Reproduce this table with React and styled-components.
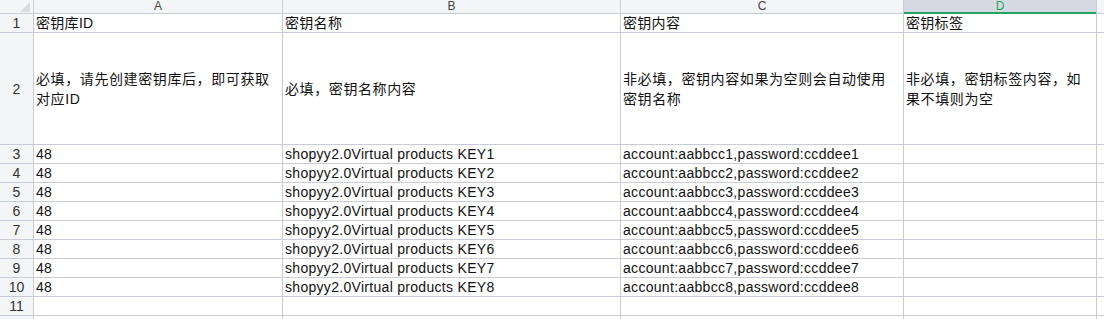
import React from 'react';
import styled, { createGlobalStyle } from 'styled-components';

const Global = createGlobalStyle`
  html, body {
    margin: 0;
    padding: 0;
    background: #ffffff;
    overflow: hidden;
  }
  body {
    font-family: "Liberation Sans", "Noto Sans CJK SC", Arial, sans-serif;
    font-size: 14px;
    color: #111;
  }
`;

const Sheet = styled.div`
  display: grid;
  grid-template-columns: 33px 248px 337px 282px 192px 1fr;
  grid-template-rows: 13px 18px 111px repeat(9, 18px) 10px;
  gap: 1px;
  background: #c9ccd8;
  width: 1104px;
  height: 319px;
  overflow: hidden;
`;

const Corner = styled.div`
  background: #f4f5f7;
  position: relative;
  &::after {
    content: '';
    position: absolute;
    right: 3px;
    bottom: 1px;
    width: 10px;
    height: 10px;
    background: #d8dbe1;
    clip-path: polygon(100% 0, 100% 100%, 0 100%);
  }
`;

const ColHead = styled.div`
  background: ${p => (p.$active ? '#d6d9e0' : '#f4f5f7')};
  color: ${p => (p.$active ? '#21a366' : '#444')};
  font-size: 12px;
  line-height: 13px;
  text-align: center;
  box-shadow: ${p => (p.$active ? 'inset 0 -2px 0 #21a366' : 'none')};
  margin-bottom: ${p => (p.$active ? '-1px' : '0')};
`;

const RowHead = styled.div`
  background: #f4f5f7;
  color: #333;
  font-size: 14px;
  display: flex;
  align-items: ${p => (p.$tall ? 'center' : 'flex-end')};
  justify-content: center;
  line-height: 18px;
  overflow: hidden;
`;

const Cell = styled.div`
  background: #ffffff;
  padding: 0 2px;
  display: flex;
  flex-direction: column;
  justify-content: ${p => (p.$tall ? 'center' : 'flex-end')};
  line-height: ${p => (p.$tall ? '20px' : '18px')};
  letter-spacing: ${p => (p.$tall ? '0.6px' : '0.3px')};
  overflow: hidden;
  white-space: nowrap;
`;

const columns = ['A', 'B', 'C', 'D', ''];

const header = ['密钥库ID', '密钥名称', '密钥内容', '密钥标签', ''];
const notes = [
  ['必填，请先创建密钥库后，即可获取', '对应ID'],
  ['必填，密钥名称内容'],
  ['非必填，密钥内容如果为空则会自动使用', '密钥名称'],
  ['非必填，密钥标签内容，如', '果不填则为空'],
  [],
];

const data = Array.from({ length: 8 }, (_, i) => [
  '48',
  `shopyy2.0Virtual products KEY${i + 1}`,
  `account:aabbcc${i + 1},password:ccddee${i + 1}`,
  '',
  '',
]);

const blank = ['', '', '', '', ''];
const rows = [header, notes, ...data, blank, blank];

const App = () => (
  <>
    <Global />
    <Sheet>
      <Corner />
      {columns.map((c, i) => (
        <ColHead key={i} $active={c === 'D'}>{c}</ColHead>
      ))}
      {rows.map((row, r) => (
        <React.Fragment key={r}>
          <RowHead $tall={r === 1}>{r < 11 ? r + 1 : ''}</RowHead>
          {row.map((v, c) => (
            <Cell key={c} $tall={r === 1}>
              {Array.isArray(v) ? v.map((line, k) => <span key={k}>{line}</span>) : v}
            </Cell>
          ))}
        </React.Fragment>
      ))}
    </Sheet>
  </>
);

export default App;
